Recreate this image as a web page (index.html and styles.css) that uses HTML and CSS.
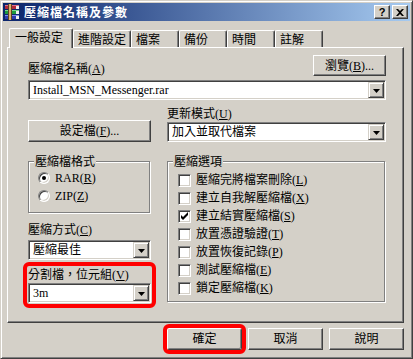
FILE: index.html
```html
<html>

<head>
    <title>壓縮檔名稱及參數</title>
    <link rel="stylesheet" href="styles.css">
</head>

<body>
    <div class="window">
        <div class="titlebar">
            <svg class="app-icon" width="16" height="16" viewBox="0 0 16 16">
                <rect x="1" y="1" width="14" height="4" fill="#b0283c" />
                <rect x="1" y="1" width="14" height="1" fill="#e07088" />
                <rect x="1" y="6" width="14" height="4" fill="#1e9a3e" />
                <rect x="1" y="6" width="14" height="1" fill="#78d890" />
                <rect x="1" y="11" width="14" height="4" fill="#2c3cb0" />
                <rect x="1" y="11" width="14" height="1" fill="#8090e8" />
                <rect x="12" y="2" width="3" height="3" fill="#f0f0f0" />
                <rect x="12" y="7" width="3" height="3" fill="#f0f0f0" />
                <rect x="12" y="12" width="3" height="3" fill="#f0f0f0" />
                <rect x="4" y="0" width="3" height="16" fill="#d8b070" />
                <rect x="4" y="0" width="1" height="16" fill="#604020" />
                <rect x="7" y="0" width="1" height="16" fill="#604020" />
            </svg>
            <span class="title">壓縮檔名稱及參數</span>
            <div class="caption-buttons">
                <span class="cap-btn">?</span>
                <span class="cap-btn">
                    <svg width="8" height="7" viewBox="0 0 8 7">
                        <path d="M0 0h2l2 2 2-2h2L5 3.5 8 7H6L4 5 2 7H0l3-3.5z" fill="#000" />
                    </svg>
                </span>
            </div>
        </div>

        <div class="tabs">
            <div class="tab active" style="width: 64px;">一般設定</div>
            <div class="tab" style="width: 58px;">進階設定</div>
            <div class="tab" style="width: 48px;">檔案</div>
            <div class="tab" style="width: 48px;">備份</div>
            <div class="tab" style="width: 48px;">時間</div>
            <div class="tab" style="width: 48px;">註解</div>
        </div>

        <div class="panel">
            <div class="name-row">
                <span class="label">壓縮檔名稱(<u>A</u>)</span>
                <div class="btn browse"><span>瀏覽(<u>B</u>)...</span></div>
            </div>
            <div class="combo name-combo">
                <span class="val">Install_MSN_Messenger.rar</span>
                <span class="drop"><svg width="7" height="4" viewBox="0 0 7 4"><path d="M0 0h7L3.5 4z" fill="#000" /></svg></span>
            </div>

            <div class="cols">
                <div class="col left">
                    <div class="btn profile"><span>設定檔(<u>F</u>)...</span></div>

                    <div class="group">
                        <div class="group-title">壓縮檔格式</div>
                        <div class="opt"><span class="radio checked"></span><span>RAR(<u>R</u>)</span></div>
                        <div class="opt"><span class="radio"></span><span>ZIP(<u>Z</u>)</span></div>
                    </div>

                    <span class="label method-label">壓縮方式(<u>C</u>)</span>
                    <div class="combo">
                        <span class="val">壓縮最佳</span>
                        <span class="drop"><svg width="7" height="4" viewBox="0 0 7 4"><path d="M0 0h7L3.5 4z" fill="#000" /></svg></span>
                    </div>

                    <div class="marked">
                        <span class="label">分割檔，位元組(<u>V</u>)</span>
                        <div class="combo">
                            <span class="val">3m</span>
                            <span class="drop"><svg width="7" height="4" viewBox="0 0 7 4"><path d="M0 0h7L3.5 4z" fill="#000" /></svg></span>
                        </div>
                    </div>
                </div>

                <div class="col right">
                    <span class="label update-label">更新模式(<u>U</u>)</span>
                    <div class="combo">
                        <span class="val">加入並取代檔案</span>
                        <span class="drop"><svg width="7" height="4" viewBox="0 0 7 4"><path d="M0 0h7L3.5 4z" fill="#000" /></svg></span>
                    </div>

                    <div class="group options">
                        <div class="group-title">壓縮選項</div>
                        <div class="chk"><span class="box"></span><span>壓縮完將檔案刪除(<u>L</u>)</span></div>
                        <div class="chk"><span class="box"></span><span>建立自我解壓縮檔(<u>X</u>)</span></div>
                        <div class="chk"><span class="box"><svg width="9" height="9" viewBox="0 0 9 9"><path d="M1 3v3l2 2 5-5V0L3 5z" fill="#000" /></svg></span><span>建立結實壓縮檔(<u>S</u>)</span></div>
                        <div class="chk"><span class="box"></span><span>放置憑證驗證(<u>T</u>)</span></div>
                        <div class="chk"><span class="box"></span><span>放置恢復記錄(<u>P</u>)</span></div>
                        <div class="chk"><span class="box"></span><span>測試壓縮檔(<u>E</u>)</span></div>
                        <div class="chk"><span class="box"></span><span>鎖定壓縮檔(<u>K</u>)</span></div>
                    </div>
                </div>
            </div>
        </div>

        <div class="footer">
            <div class="btn wide default">確定</div>
            <div class="btn wide">取消</div>
            <div class="btn wide">說明</div>
        </div>
    </div>
</body>

</html>
```

FILE: styles.css
```css
body {
    margin: 0;
    background-color: #d4d0c8;
    font-family: "Liberation Serif", "Noto Sans CJK TC", serif;
    font-size: 12px;
    line-height: 14px;
    color: #000;
}

u {
    text-decoration-thickness: 1px;
    text-underline-offset: 1px;
}

.window {
    width: 413px;
    height: 359px;
    box-sizing: border-box;
    background-color: #d4d0c8;
    border: 1px solid;
    border-color: #d4d0c8 #404040 #404040 #d4d0c8;
    box-shadow: inset 1px 1px #fff, inset -1px -1px #808080;
    padding: 2px;
    display: flex;
    flex-direction: column;
}

/* title bar */
.titlebar {
    height: 18px;
    display: flex;
    align-items: center;
    padding: 0 2px 0 1px;
    background: linear-gradient(to right, #0a246a, #a6caf0);
}

.app-icon {
    flex: none;
}

.title {
    margin-left: 4px;
    color: #fff;
    font-family: "Noto Sans CJK TC", sans-serif;
    font-weight: bold;
    font-size: 12px;
    letter-spacing: 1px;
}

.caption-buttons {
    margin-left: auto;
    display: flex;
    gap: 2px;
}

.cap-btn {
    width: 16px;
    height: 14px;
    box-sizing: border-box;
    background-color: #d4d0c8;
    border: 1px solid;
    border-color: #fff #404040 #404040 #fff;
    box-shadow: inset -1px -1px #808080;
    display: flex;
    align-items: center;
    justify-content: center;
    font-family: "Liberation Sans", sans-serif;
    font-weight: bold;
    font-size: 11px;
    line-height: 11px;
}

/* tabs */
.tabs {
    margin: 7px 0 0 4px;
    height: 19px;
    display: flex;
    align-items: flex-end;
}

.tab {
    height: 17px;
    box-sizing: border-box;
    border-top: 1px solid #fff;
    border-left: 1px solid #fff;
    border-right: 1px solid #404040;
    border-radius: 2px 2px 0 0;
    box-shadow: inset -1px 0 #808080;
    padding: 2px 0 0 4px;
    white-space: nowrap;
}

.tab.active {
    height: 20px;
    margin: 0 0 -1px 2px;
    padding: 2px 0 0 5px;
    position: relative;
    z-index: 1;
    background-color: #d4d0c8;
}

.panel {
    width: 397px;
    height: 276px;
    box-sizing: border-box;
    margin-left: 4px;
    border-top: 1px solid #fff;
    border-left: 1px solid #fff;
    border-right: 1px solid #404040;
    border-bottom: 1px solid #404040;
    box-shadow: inset -1px -1px #808080;
    padding: 7px 0 0 20px;
}

/* controls */
.btn {
    box-sizing: border-box;
    background-color: #d4d0c8;
    border: 1px solid;
    border-color: #fff #404040 #404040 #fff;
    box-shadow: inset -1px -1px #808080;
    display: flex;
    align-items: center;
    justify-content: center;
    white-space: nowrap;
}

.combo {
    height: 20px;
    box-sizing: border-box;
    display: flex;
    align-items: center;
    background-color: #fff;
    border: 1px solid;
    border-color: #808080 #fff #fff #808080;
    box-shadow: inset 1px 1px #404040, inset -1px -1px #d4d0c8;
    padding: 1px;
}

.combo .val {
    flex: 1;
    padding-left: 3px;
    white-space: nowrap;
}

.combo .drop {
    width: 16px;
    height: 16px;
    box-sizing: border-box;
    background-color: #d4d0c8;
    border: 1px solid;
    border-color: #d4d0c8 #404040 #404040 #d4d0c8;
    box-shadow: inset 1px 1px #fff, inset -1px -1px #808080;
    display: flex;
    align-items: center;
    justify-content: center;
}

.combo .drop svg {
    margin-top: 1px;
}

.label {
    display: block;
    white-space: nowrap;
}

.name-row {
    width: 358px;
    height: 21px;
    display: flex;
    align-items: flex-end;
}

.browse {
    margin-left: auto;
    width: 73px;
    height: 21px;
}

.name-combo {
    width: 358px;
    margin-top: 4px;
}

.cols {
    display: flex;
    gap: 16px;
}

.col {
    display: flex;
    flex-direction: column;
}

.col.left {
    width: 123px;
}

.col.right {
    width: 219px;
}

.profile {
    margin-top: 20px;
    height: 22px;
}

.update-label {
    margin-top: 7px;
    margin-bottom: 1px;
}

/* group boxes */
.group {
    margin: 19px 1px 0 0;
    border: 1px solid #808080;
    box-shadow: 1px 1px #fff, inset 1px 1px #fff;
    padding-bottom: 7px;
}

.group.options {
    padding-bottom: 4px;
}

.group-title {
    width: fit-content;
    margin: -7px 0 0 5px;
    padding: 0 1px;
    background-color: #d4d0c8;
}

.options .group-title {
    margin-bottom: 2px;
}

.opt,
.chk {
    height: 18px;
    display: flex;
    align-items: center;
    gap: 5px;
    white-space: nowrap;
}

.opt {
    padding-left: 9px;
}

.chk {
    padding-left: 10px;
}

.radio {
    width: 12px;
    height: 12px;
    box-sizing: border-box;
    border-radius: 50%;
    background-color: #fff;
    border: 1px solid;
    border-color: #808080 #fff #fff #808080;
    box-shadow: inset 1px 1px #404040, inset -1px -1px #d4d0c8;
    display: flex;
    align-items: center;
    justify-content: center;
}

.radio.checked::after {
    content: "";
    width: 4px;
    height: 4px;
    border-radius: 50%;
    background-color: #000;
}

.chk .box {
    width: 13px;
    height: 13px;
    box-sizing: border-box;
    background-color: #fff;
    border: 1px solid;
    border-color: #808080 #fff #fff #808080;
    box-shadow: inset 1px 1px #404040, inset -1px -1px #d4d0c8;
    display: flex;
    align-items: center;
    justify-content: center;
}

.method-label {
    margin-top: 10px;
    margin-bottom: 3px;
}

.marked {
    margin: 6px 0 0 -1px;
    width: 125px;
    box-sizing: border-box;
    padding: 2px 1px 1px;
    outline: 4px solid #f00;
    border-radius: 2px;
}

.marked .combo {
    margin-top: 1px;
}

/* dialog buttons */
.footer {
    width: 397px;
    margin: 5px 0 0 4px;
    display: flex;
    justify-content: flex-end;
    gap: 6px;
}

.btn.wide {
    width: 75px;
    height: 22px;
}

.btn.default {
    outline: 4px solid #f00;
    border-radius: 2px;
}
```
